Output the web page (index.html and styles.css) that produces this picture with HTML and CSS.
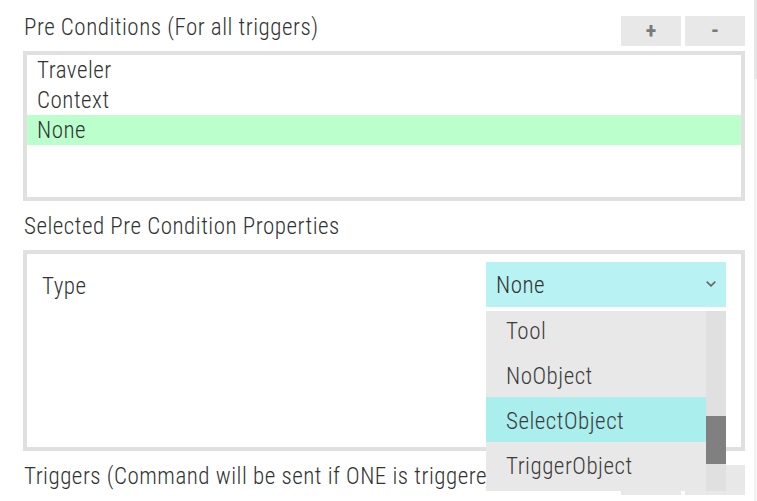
FILE: index.html
```html
<!DOCTYPE html>
<html>
<head>
<meta charset="utf-8">
<link rel="stylesheet" href="styles.css">
</head>
<body>
<div class="page">
  <main class="main">
    <section class="section">
      <div class="head">
        <div class="title">Pre Conditions (For all triggers)</div>
        <div class="btns">
          <button class="btn">+</button>
          <button class="btn">-</button>
        </div>
      </div>
      <div class="box list">
        <div class="item">Traveler</div>
        <div class="item">Context</div>
        <div class="item sel">None</div>
      </div>
    </section>

    <section class="section">
      <div class="head">
        <div class="title">Selected Pre Condition Properties</div>
      </div>
      <div class="box props">
        <div class="prop-row">
          <div class="prop-label">Type</div>
          <div class="select-wrap">
            <div class="select">
              <span>None</span>
              <svg class="chev" width="10" height="6" viewBox="0 0 10 6"><path d="M0.7 0.7 L5 4.8 L9.3 0.7" fill="none" stroke="#666" stroke-width="1.6"/></svg>
            </div>
            <div class="dropdown">
              <div class="options">
                <div class="opt">Tool</div>
                <div class="opt">NoObject</div>
                <div class="opt active">SelectObject</div>
                <div class="opt">TriggerObject</div>
              </div>
              <div class="track"><div class="thumb"></div></div>
            </div>
          </div>
        </div>
      </div>
    </section>

    <section class="section">
      <div class="head">
        <div class="title">Triggers (Command will be sent if ONE is triggered)</div>
        <div class="btns">
          <button class="btn">+</button>
          <button class="btn">-</button>
        </div>
      </div>
    </section>
  </main>
  <div class="vscroll"><div class="vthumb"></div></div>
</div>
</body>
</html>
```
FILE: styles.css
```css
html, body {
  margin: 0;
  padding: 0;
  height: 100%;
  overflow: hidden;
  background: #fff;
}
body {
  font-family: "Roboto Condensed", "Roboto", sans-serif;
  font-size: 23px;
  font-weight: 300;
  letter-spacing: 0.5px;
  color: #333;
}
.page {
  display: flex;
  height: 501px;
}
.main {
  flex: 1;
  padding: 2px 9px 0 23px;
}
.vscroll {
  width: 3px;
  background: #f3f3f3;
}
.vthumb {
  height: 79px;
  background: #e6e6e6;
}
.section {
  padding-top: 10px;
}
.head {
  display: flex;
  justify-content: space-between;
  align-items: flex-start;
  height: 39px;
}
.title {
  line-height: 32px;
  height: 30px;
  padding-left: 1px;
  white-space: nowrap;
}
.btns {
  display: flex;
  gap: 4px;
  margin-top: 4px;
}
.btn {
  width: 60px;
  height: 30px;
  border: 0;
  padding: 0;
  background: #e8e8e8;
  color: #7a7a7a;
  font-family: "Roboto Condensed", "Roboto", sans-serif;
  font-size: 22px;
  font-weight: 700;
  line-height: 30px;
}
.box {
  border: 4px solid #e0e0e0;
  background: #fff;
}
.list {
  height: 142px;
}
.item {
  height: 30px;
  line-height: 32px;
  padding-left: 10px;
}
.item.sel {
  background: #bbffcc;
}
.props {
  height: 193px;
}
.prop-row {
  display: flex;
  justify-content: space-between;
  padding: 8px 15px 0 15px;
}
.prop-label {
  line-height: 45px;
  padding-top: 2px;
}
.select-wrap {
  position: relative;
  width: 240px;
}
.select {
  height: 45px;
  background: #b8f2f2;
  display: flex;
  align-items: center;
  justify-content: space-between;
  padding: 2px 10px 0 10px;
  box-sizing: border-box;
}
.chev {
  margin-top: -3px;
}
.dropdown {
  position: absolute;
  top: 49px;
  left: 0;
  width: 240px;
  height: 180px;
  display: flex;
  background: #e8e8e8;
  z-index: 5;
}
.options {
  flex: 1;
  overflow: hidden;
}
.opt {
  height: 45px;
  line-height: 45px;
  padding: 2px 0 0 20px;
  box-sizing: border-box;
  color: #3c3c3c;
}
.opt:first-child {
  margin-top: -4px;
}
.opt.active {
  background: #aaeeee;
}
.track {
  width: 20px;
  background: #e0e0e0;
}
.thumb {
  margin-top: 105px;
  height: 48px;
  background: #808080;
}
```
